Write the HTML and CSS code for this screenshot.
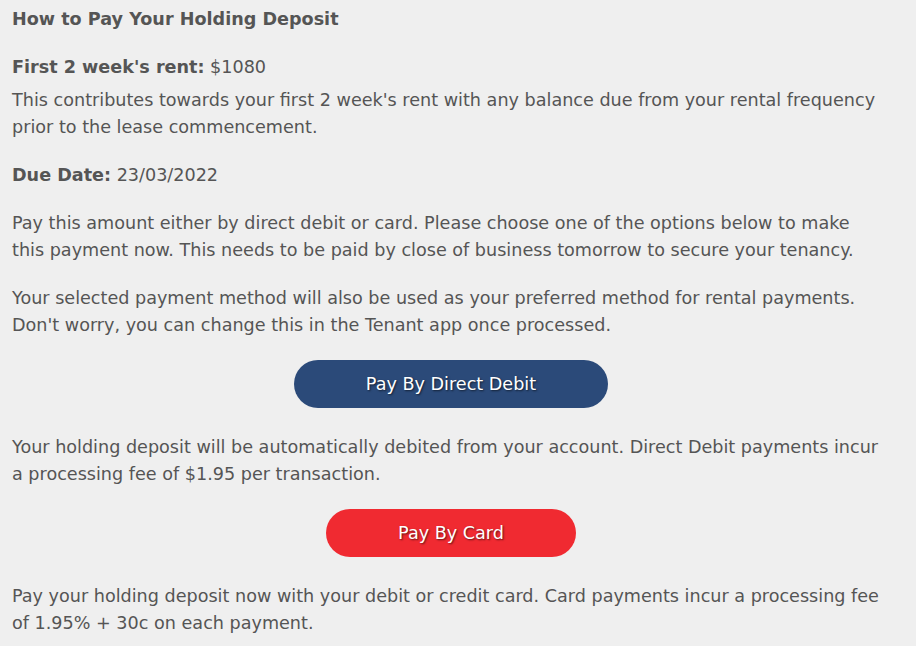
FILE: index.html
```html
<!DOCTYPE html>
<html lang="en">
  <head>
    <meta charset="UTF-8" />
    <meta name="viewport" content="width=device-width, initial-scale=1" />
    <title>Holding Deposit</title>
    <link rel="stylesheet" href="styles.css">
  </head>
  <body>
    <div class="container">
      <h2 class="title">How to Pay Your Holding Deposit</h2>
      <p class="amount"><strong>First 2 week's rent:</strong> $1080</p>
      <p>This contributes towards your first 2 week's rent with any balance due from your rental frequency prior to the lease commencement.</p>
      <p><strong>Due Date:</strong> 23/03/2022</p>
      <p>Pay this amount either by direct debit or card. Please choose one of the options below to make this payment now. This needs to be paid by close of business tomorrow to secure your tenancy.</p>
      <p>Your selected payment method will also be used as your preferred method for rental payments. Don't worry, you can change this in the Tenant app once processed.</p>
      <div class="actions">
        <button type="button" class="pay-btn debit">Pay By Direct Debit</button>
      </div>
      <p>Your holding deposit will be automatically debited from your account. Direct Debit payments incur a processing fee of $1.95 per transaction.</p>
      <div class="actions">
        <button type="button" class="pay-btn card">Pay By Card</button>
      </div>
      <p>Pay your holding deposit now with your debit or credit card. Card payments incur a processing fee of 1.95% + 30c on each payment.</p>
    </div>
  </body>
</html>
```

FILE: styles.css
```css
:root {
  --bg: #efefef;
  --text: #555;
  --blue: #2b4a79;
  --red: #f02a31;
}
body {
  margin: 0;
  background: var(--bg);
  color: var(--text);
  font-family: "DejaVu Sans", Verdana, sans-serif;
  font-size: 17.6px;
  line-height: 27px;
}
.container {
  width: 878px;
  padding: 6px 0 0 12px;
}
.title {
  font-size: 17.6px;
  font-weight: bold;
  margin: 0 0 21px 0;
}
p {
  max-width: 870px;
  margin: 0 0 21px 0;
}
p.amount {
  margin-bottom: 6px;
}
strong {
  font-weight: bold;
}
.actions {
  display: flex;
  justify-content: center;
  margin: 5px 0 26px 0;
}
.pay-btn {
  height: 48px;
  padding: 0 72px;
  border: none;
  border-radius: 24px;
  color: #fff;
  font-family: inherit;
  font-size: 17.6px;
  text-shadow: 1px 1px 2px rgba(0, 0, 0, 0.6);
  cursor: pointer;
}
.pay-btn.debit {
  background: var(--blue);
}
.pay-btn.card {
  background: var(--red);
}
```
